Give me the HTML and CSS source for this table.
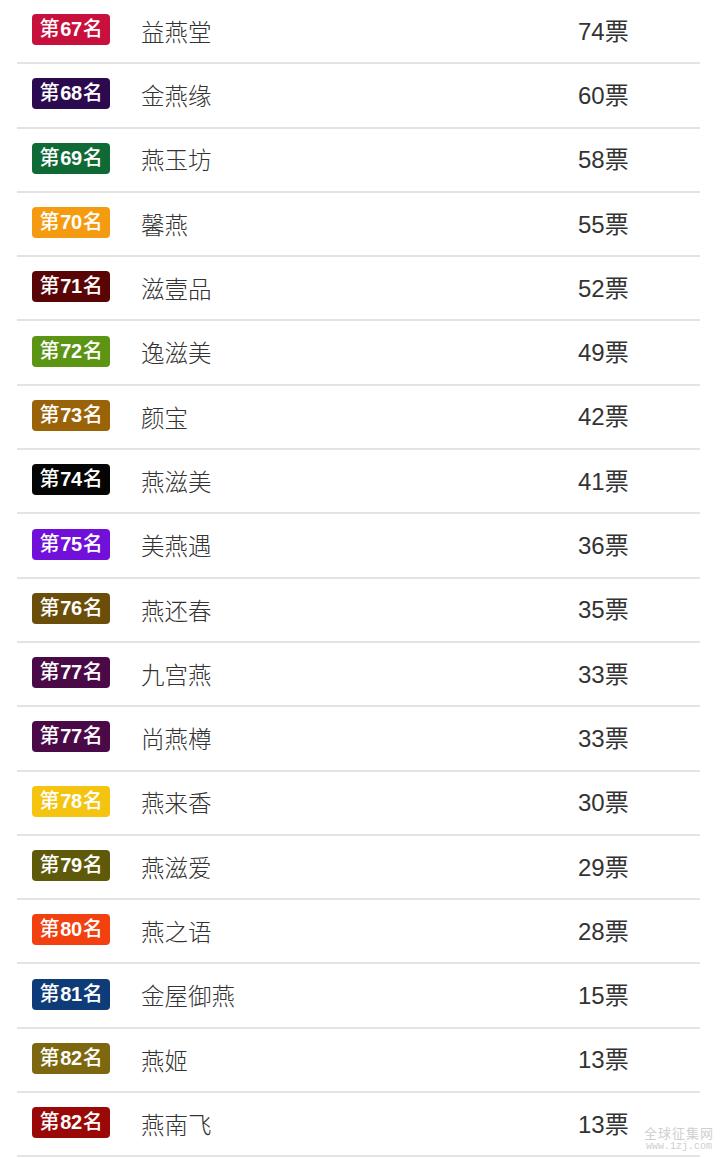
FILE: index.html
```html
<!DOCTYPE html>
<html lang="zh-CN">
<head>
  <meta charset="UTF-8">
  <title>燕窝品牌投票排行</title>
  <link rel="stylesheet" href="styles.css">
</head>
<body>
  <ul class="rank-list">
    <li class="row"><span class="badge c67">第<b>67</b>名</span><span class="name">益燕堂</span><span class="votes">74票</span></li>
    <li class="row"><span class="badge c68">第<b>68</b>名</span><span class="name">金燕缘</span><span class="votes">60票</span></li>
    <li class="row"><span class="badge c69">第<b>69</b>名</span><span class="name">燕玉坊</span><span class="votes">58票</span></li>
    <li class="row"><span class="badge c70">第<b>70</b>名</span><span class="name">馨燕</span><span class="votes">55票</span></li>
    <li class="row"><span class="badge c71">第<b>71</b>名</span><span class="name">滋壹品</span><span class="votes">52票</span></li>
    <li class="row"><span class="badge c72">第<b>72</b>名</span><span class="name">逸滋美</span><span class="votes">49票</span></li>
    <li class="row"><span class="badge c73">第<b>73</b>名</span><span class="name">颜宝</span><span class="votes">42票</span></li>
    <li class="row"><span class="badge c74">第<b>74</b>名</span><span class="name">燕滋美</span><span class="votes">41票</span></li>
    <li class="row"><span class="badge c75">第<b>75</b>名</span><span class="name">美燕遇</span><span class="votes">36票</span></li>
    <li class="row"><span class="badge c76">第<b>76</b>名</span><span class="name">燕还春</span><span class="votes">35票</span></li>
    <li class="row"><span class="badge c77">第<b>77</b>名</span><span class="name">九宫燕</span><span class="votes">33票</span></li>
    <li class="row"><span class="badge c77">第<b>77</b>名</span><span class="name">尚燕樽</span><span class="votes">33票</span></li>
    <li class="row"><span class="badge c78">第<b>78</b>名</span><span class="name">燕来香</span><span class="votes">30票</span></li>
    <li class="row"><span class="badge c79">第<b>79</b>名</span><span class="name">燕滋爱</span><span class="votes">29票</span></li>
    <li class="row"><span class="badge c80">第<b>80</b>名</span><span class="name">燕之语</span><span class="votes">28票</span></li>
    <li class="row"><span class="badge c81">第<b>81</b>名</span><span class="name">金屋御燕</span><span class="votes">15票</span></li>
    <li class="row"><span class="badge c82a">第<b>82</b>名</span><span class="name">燕姬</span><span class="votes">13票</span></li>
    <li class="row"><span class="badge c82b">第<b>82</b>名</span><span class="name">燕南飞</span><span class="votes">13票</span></li>
  </ul>
  <div class="watermark">
    <div class="wm-title">全球征集网</div>
    <div class="wm-url">www.1zj.com</div>
  </div>
</body>
</html>
```

FILE: styles.css
```css
body {
  margin: 0;
  background: #fff;
  font-family: "Liberation Sans", "Noto Sans CJK SC", sans-serif;
  color: #333;
  overflow: hidden;
}
.rank-list {
  list-style: none;
  margin: 0 20px 0 17px;
  padding: 0;
}
.row {
  display: flex;
  align-items: center;
  height: 64.3px;
  box-sizing: border-box;
  padding: 0 0 3px 15px;
  border-bottom: 2px solid #e3e3e3;
}
.badge {
  width: 78px;
  height: 31px;
  border-radius: 4px;
  margin-right: 31px;
  color: #fff;
  font-size: 20px;
  font-weight: 500;
  line-height: 31px;
  text-align: center;
  letter-spacing: -0.3px;
  white-space: nowrap;
}
.badge b {
  font-weight: bold;
  margin: 0 1px;
}
.name {
  flex: 1;
  margin-top: 4px;
  font-family: "Noto Sans CJK SC", sans-serif;
  font-size: 23.5px;
  font-weight: 300;
  color: #333;
}
.votes {
  width: 122px;
  margin-top: 4px;
  font-size: 24px;
  color: #333;
  white-space: nowrap;
}
.votes, .name { line-height: 1; }

.c67 { background: #c8103c; }
.c68 { background: #2b0a4f; }
.c69 { background: #106a36; }
.c70 { background: #f59b12; }
.c71 { background: #5a0505; }
.c72 { background: #5c9414; }
.c73 { background: #9a6308; }
.c74 { background: #050505; }
.c75 { background: #7010d8; }
.c76 { background: #6a4e0a; }
.c77 { background: #4a0a48; }
.c78 { background: #f5c411; }
.c79 { background: #5e5a0a; }
.c80 { background: #f2400f; }
.c81 { background: #0e3c78; }
.c82a { background: #7d6810; }
.c82b { background: #9a0808; }

/* 角落水印 */
.watermark {
  position: absolute;
  right: 6px;
  top: 1126px;
  text-align: center;
  color: #cfcfcf;
  line-height: 1;
}
.wm-title {
  font-family: "Noto Sans CJK SC", sans-serif;
  font-size: 13px;
  letter-spacing: 1px;
}
.wm-url {
  font-family: "Liberation Mono", monospace;
  font-size: 10px;
  margin-top: 3px;
}
```
